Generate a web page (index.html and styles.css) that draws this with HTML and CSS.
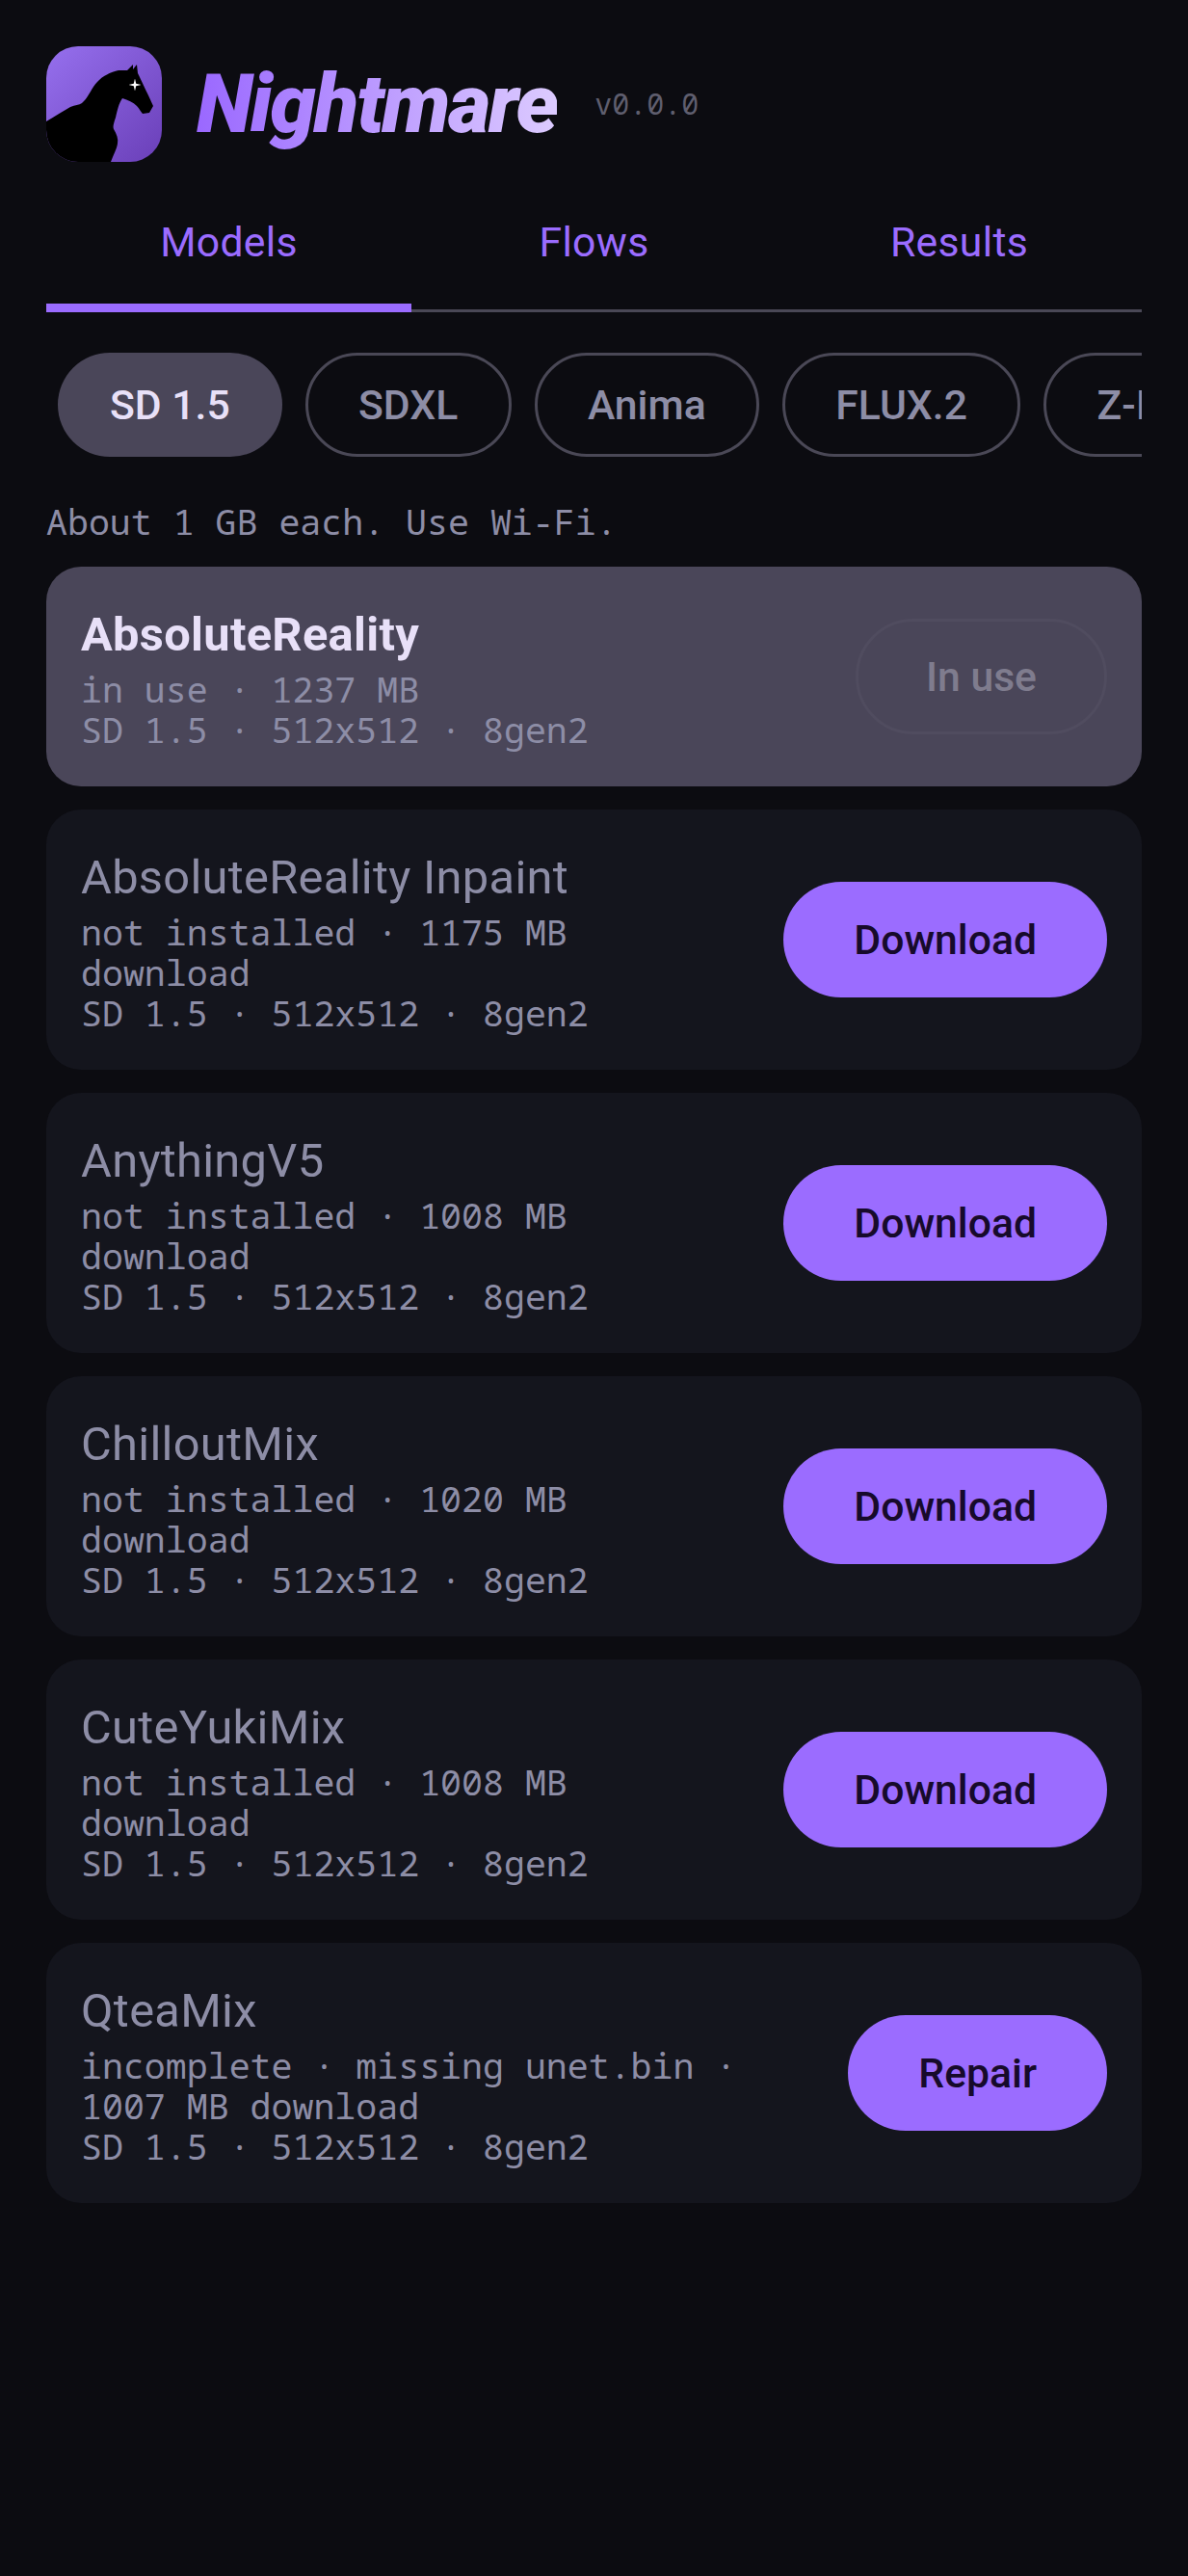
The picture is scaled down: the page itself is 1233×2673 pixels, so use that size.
FILE: index.html
```html
<!DOCTYPE html>
<html lang="en">
<head>
<meta charset="utf-8">
<title>Nightmare</title>
<link rel="stylesheet" href="styles.css">
</head>
<body>
<main class="screen">
  <header class="brand">
    <svg class="logo" viewBox="0 0 120 120" aria-hidden="true">
      <defs>
        <linearGradient id="lg" x1="0" y1="0" x2="1" y2="1">
          <stop offset="0" stop-color="#9670ee"/>
          <stop offset="1" stop-color="#6a3fb8"/>
        </linearGradient>
        <clipPath id="lc"><rect width="120" height="120" rx="33"/></clipPath>
      </defs>
      <g clip-path="url(#lc)">
        <rect width="120" height="120" fill="url(#lg)"/>
        <path fill="#000" d="M0 78 C10 72 18 67 25 63 C30 61 34 61 37 59 C42 55 45 48 49 42 C54 35 58 32 62 30 C67 27 71 26 75 25 L84 25 L90 19 L90 24 L94 19 L95 28 C99 36 103 45 106 51 L111 62 L107 69 L100 70 C98 68 97 65 94 62 C90 58 85 56 79 54 C75 60 74 66 72 74 C70 80 69 83 70 86 C73 91 75 96 74 101 C73 107 70 112 67 120 L0 120 Z"/>
        <path fill="#fff" d="M92 33.500 L93.200 38.800 L98.500 40 L93.200 41.200 L92 46.500 L90.800 41.200 L85.500 40 L90.800 38.800 Z"/>
      </g>
    </svg>
    <h1 class="wordmark">Nightmare</h1>
    <span class="version">v0.0.0</span>
  </header>

  <nav class="tabs">
    <a class="tab tab-active">Models</a>
    <a class="tab">Flows</a>
    <a class="tab">Results</a>
  </nav>

  <div class="chips">
    <span class="chip chip-active">SD 1.5</span>
    <span class="chip">SDXL</span>
    <span class="chip">Anima</span>
    <span class="chip">FLUX.2</span>
    <span class="chip">Z-Image</span>
  </div>

  <p class="hint">About 1 GB each. Use Wi-Fi.</p>

  <section class="list">
    <article class="card card-active">
      <div class="info">
        <h2 class="name name-active">AbsoluteReality</h2>
        <p class="meta">in use · 1237 MB</p>
        <p class="meta">SD 1.5 · 512x512 · 8gen2</p>
      </div>
      <button class="btn btn-off">In use</button>
    </article>
    <article class="card">
      <div class="info">
        <h2 class="name">AbsoluteReality Inpaint</h2>
        <p class="meta">not installed · 1175 MB download</p>
        <p class="meta">SD 1.5 · 512x512 · 8gen2</p>
      </div>
      <button class="btn">Download</button>
    </article>
    <article class="card">
      <div class="info">
        <h2 class="name">AnythingV5</h2>
        <p class="meta">not installed · 1008 MB download</p>
        <p class="meta">SD 1.5 · 512x512 · 8gen2</p>
      </div>
      <button class="btn">Download</button>
    </article>
    <article class="card">
      <div class="info">
        <h2 class="name">ChilloutMix</h2>
        <p class="meta">not installed · 1020 MB download</p>
        <p class="meta">SD 1.5 · 512x512 · 8gen2</p>
      </div>
      <button class="btn">Download</button>
    </article>
    <article class="card">
      <div class="info">
        <h2 class="name">CuteYukiMix</h2>
        <p class="meta">not installed · 1008 MB download</p>
        <p class="meta">SD 1.5 · 512x512 · 8gen2</p>
      </div>
      <button class="btn">Download</button>
    </article>
    <article class="card">
      <div class="info">
        <h2 class="name">QteaMix</h2>
        <p class="meta">incomplete · missing unet.bin · 1007 MB download</p>
        <p class="meta">SD 1.5 · 512x512 · 8gen2</p>
      </div>
      <button class="btn">Repair</button>
    </article>
  </section>
</main>
</body>
</html>
```
FILE: styles.css
```css
* { box-sizing: border-box; }
html, body { margin: 0; padding: 0; }
body {
  background: #0c0c11;
  font-family: Roboto, "Noto Sans", sans-serif;
  min-height: 2673px;
}
.screen { padding: 48px 48px 0; }

.brand { display: flex; align-items: center; height: 120px; }
.logo { width: 120px; height: 120px; flex: none; }
.wordmark {
  margin: 0 0 0 36px;
  font-size: 85.400px;
  line-height: 120px;
  font-weight: 900;
  font-style: italic;
  letter-spacing: -2.300px;
  background: linear-gradient(90deg, #9a68ff 0%, #dccbff 100%);
  -webkit-background-clip: text;
  background-clip: text;
  color: transparent;
}
.version {
  margin: -2px 0 0 39px;
  font-family: "Noto Sans Mono", "DejaVu Sans Mono", monospace;
  font-size: 30px;
  color: #5f5e6e;
}

.tabs {
  display: grid;
  grid-template-columns: repeat(3, 1fr);
  margin-top: 36px;
  border-bottom: 3px solid #4a4856;
}
.tab {
  height: 120px;
  padding-top: 22px;
  text-align: center;
  font-size: 42.700px;
  letter-spacing: 0.300px;
  line-height: 50px;
  color: #9b6cff;
  margin-bottom: -3px;
}
.tab-active { border-bottom: 9px solid #9b6cff; }

.chips {
  display: flex;
  gap: 24px;
  margin-top: 42px;
  padding-left: 12px;
  overflow: hidden;
}
.chip {
  flex: none;
  height: 108px;
  padding: 0 52.300px;
  border: 3px solid #4a4856;
  border-radius: 54px;
  display: flex;
  align-items: center;
  font-size: 42.700px;
  font-weight: 500;
  color: #8d8da6;
}
.chip-active { padding: 0 54px; background: #4a4659; border: 0; color: #e8e0f8; }

.hint {
  margin: 40px 0 0;
  height: 54px;
  font-family: "Noto Sans Mono", "DejaVu Sans Mono", monospace;
  font-size: 36.600px;
  line-height: 54px;
  color: #8d8da6;
}

.list { display: flex; flex-direction: column; gap: 24px; margin-top: 20px; }
.card {
  display: flex;
  align-items: center;
  gap: 36px;
  padding: 36px;
  background: #14151d;
  border-radius: 36px;
}
.card-active { background: #4a4659; }
.info { flex: 1; min-width: 0; padding-bottom: 2px; }
.name {
  margin: 0;
  font-size: 48.800px;
  letter-spacing: 0.300px;
  line-height: 70px;
  font-weight: 400;
  color: #8d8da6;
}
.name-active { font-weight: 700; color: #e8e0f8; }
.meta {
  margin: 0;
  font-family: "Noto Sans Mono", "DejaVu Sans Mono", monospace;
  font-size: 36.600px;
  line-height: 42px;
  color: #8d8da6;
}
.btn {
  flex: none;
  height: 120px;
  padding: 0 73px;
  border: 0;
  border-radius: 60px;
  background: #9b6cff;
  font-family: inherit;
  font-size: 42.700px;
  font-weight: 500;
  color: #170a2b;
}
.btn-off {
  padding: 0 70px;
  background: transparent;
  border: 3px solid #504c5f;
  color: #7f7c8e;
}
```
